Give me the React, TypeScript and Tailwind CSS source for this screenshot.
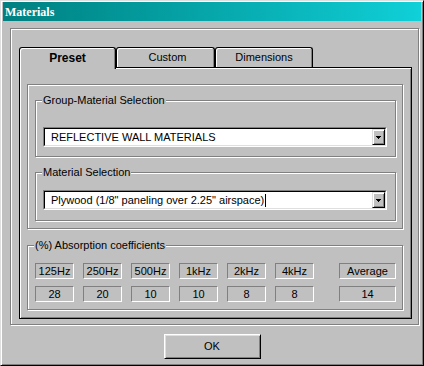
function Arrow() {
  return (
    <svg width="5" height="3" viewBox="0 0 5 3" shapeRendering="crispEdges">
      <rect x="0" y="0" width="5" height="1" fill="#000" />
      <rect x="1" y="1" width="3" height="1" fill="#000" />
      <rect x="2" y="2" width="1" height="1" fill="#000" />
    </svg>
  );
}

function Combo({ text, caret }: { text: string; caret?: boolean }) {
  return (
    <div className="h-[20px] border border-t-[#808080] border-l-[#808080] border-r-white border-b-white">
      <div className="h-full flex bg-white border border-t-black border-l-black border-r-[#dfdfdf] border-b-[#dfdfdf]">
        <div className="flex-1 flex items-center pl-[6px] text-[11px] leading-none whitespace-nowrap">
          {text}
          {caret && <span className="ml-px w-px h-[13px] bg-black" />}
        </div>
        <div className="w-[13px] h-full bg-[#c0c0c0] border border-t-[#dfdfdf] border-l-[#dfdfdf] border-r-black border-b-black shadow-[inset_1px_1px_0_#fff,inset_-1px_-1px_0_#808080] flex items-center justify-center">
          <Arrow />
        </div>
      </div>
    </div>
  );
}

function Cell({ children, wide }: { children: string; wide?: boolean }) {
  return (
    <div
      className={`${wide ? "w-[57px] ml-[16px]" : "w-[39px]"} h-[16px] border border-t-[#808080] border-l-[#808080] border-r-white border-b-white flex items-center justify-center text-[11px] leading-none`}
    >
      {children}
    </div>
  );
}

const etched = "border border-[#808080] shadow-[inset_1px_1px_0_#fff,1px_1px_0_#fff]";
const tab =
  "border-t border-l border-r border-black rounded-t-[3px] shadow-[inset_1px_1px_0_#fff,inset_-1px_0_0_#808080] flex items-center justify-center";
const legend = "-ml-[1px] px-[1px] bg-[#c0c0c0] text-[11px] leading-[13px]";

const bands = ["125Hz", "250Hz", "500Hz", "1kHz", "2kHz", "4kHz"];
const values = ["28", "20", "10", "10", "8", "8"];

export default function App() {
  return (
    <div className="w-[424px] h-[366px] bg-[#c0c0c0] text-black font-['Liberation_Sans',Arial,sans-serif] border border-t-[#dfdfdf] border-l-[#dfdfdf] border-r-black border-b-black shadow-[inset_1px_1px_0_#fff,inset_-1px_-1px_0_#808080] px-[2px] pt-[1px] flex flex-col">
      <div className="h-[19px] bg-linear-to-r from-[#008080] to-[#10d0d8] flex items-center pl-[2px] pt-px text-white font-bold text-[12px] font-['Liberation_Serif',serif]">
        Materials
      </div>

      <div className={`${etched} mt-[7px] ml-[7px] mr-[2px] pt-[18px] pl-[8px] pr-[6px] pb-[5px]`}>
        <div className="flex h-[20px] items-start">
          <div className={`${tab} relative z-10 w-[97px] h-[22px] pb-[2px] bg-[#c0c0c0] text-[12px] font-bold`}>
            Preset
          </div>
          <div className={`${tab} w-[99px] h-[20px] text-[11px] pl-[4px]`}>Custom</div>
          <div className={`${tab} w-[98px] h-[20px] text-[11px]`}>Dimensions</div>
        </div>

        <div className="border border-black shadow-[inset_1px_1px_0_#fff,inset_-1px_-1px_0_#808080] pt-[16px] pl-[7px] pr-[8px] pb-[8px]">
          <div className={`${etched} pt-[9px] pl-[7px] pr-[6px] pb-[7px]`}>
            <fieldset className={`${etched} pl-[7px] pr-[8px] pt-[20px] pb-[9px]`}>
              <legend className={legend}>Group-Material Selection</legend>
              <Combo text="REFLECTIVE WALL MATERIALS" />
            </fieldset>
            <fieldset className={`${etched} mt-[9px] pl-[7px] pr-[8px] pt-[11px] pb-[10px]`}>
              <legend className={legend}>Material Selection</legend>
              <Combo text={'Plywood (1/8" paneling over 2.25" airspace)'} caret />
            </fieldset>
          </div>

          <fieldset className={`${etched} mt-[10px] pl-[7px] pt-[11px] pb-[7px]`}>
            <legend className={legend}>(%) Absorption coefficients</legend>
            <div className="flex gap-[9px]">
              {bands.map((b) => (
                <Cell key={b}>{b}</Cell>
              ))}
              <Cell wide>Average</Cell>
            </div>
            <div className="flex gap-[9px] mt-[7px]">
              {values.map((v, i) => (
                <Cell key={i}>{v}</Cell>
              ))}
              <Cell wide>14</Cell>
            </div>
          </fieldset>
        </div>
      </div>

      <button className="mt-[9px] self-center w-[97px] h-[25px] bg-[#c0c0c0] border border-t-white border-l-white border-r-black border-b-black shadow-[inset_1px_1px_0_#dfdfdf,inset_-1px_-1px_0_#808080] text-[11px] leading-none">
        OK
      </button>
    </div>
  );
}
